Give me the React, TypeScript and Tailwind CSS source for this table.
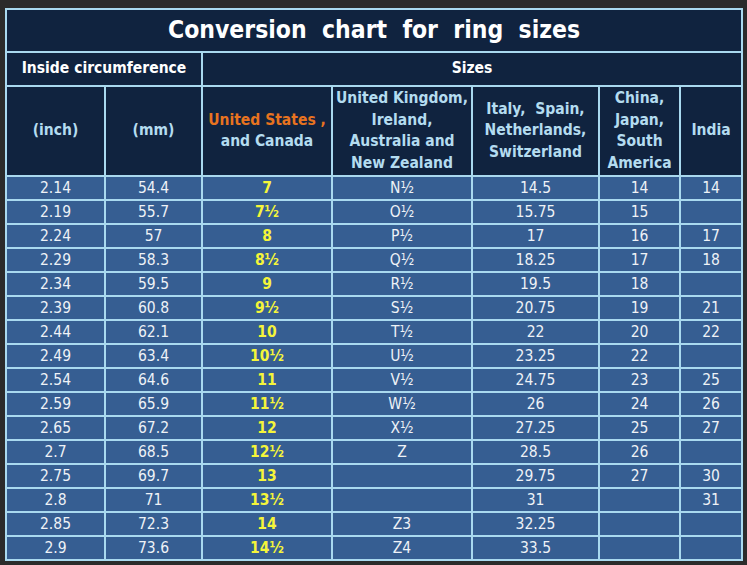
import React from 'react';

const rows: [string, string, string, string, string, string, string][] = [
  ['2.14', '54.4', '7', 'N½', '14.5', '14', '14'],
  ['2.19', '55.7', '7½', 'O½', '15.75', '15', ''],
  ['2.24', '57', '8', 'P½', '17', '16', '17'],
  ['2.29', '58.3', '8½', 'Q½', '18.25', '17', '18'],
  ['2.34', '59.5', '9', 'R½', '19.5', '18', ''],
  ['2.39', '60.8', '9½', 'S½', '20.75', '19', '21'],
  ['2.44', '62.1', '10', 'T½', '22', '20', '22'],
  ['2.49', '63.4', '10½', 'U½', '23.25', '22', ''],
  ['2.54', '64.6', '11', 'V½', '24.75', '23', '25'],
  ['2.59', '65.9', '11½', 'W½', '26', '24', '26'],
  ['2.65', '67.2', '12', 'X½', '27.25', '25', '27'],
  ['2.7', '68.5', '12½', 'Z', '28.5', '26', ''],
  ['2.75', '69.7', '13', '', '29.75', '27', '30'],
  ['2.8', '71', '13½', '', '31', '', '31'],
  ['2.85', '72.3', '14', 'Z3', '32.25', '', ''],
  ['2.9', '73.6', '14½', 'Z4', '33.5', '', ''],
];

const cell = 'border-2 border-[#a9d9ef] text-center p-0';
const head = `${cell} bg-[#10233f] text-[#b4dcf0] font-bold text-[15.5px] leading-[21.5px] whitespace-pre`;

export default function App() {
  return (
    <div className="min-h-screen bg-[#2b2b2b] pt-[8px] pl-[5px] font-['DejaVu_Sans_Condensed','DejaVu_Sans',sans-serif] font-stretch-condensed">
      <table className="table-fixed border-collapse border-2 border-[#a9d9ef] w-[736px]">
        <colgroup>
          <col className="w-[99px]" />
          <col className="w-[97px]" />
          <col className="w-[130px]" />
          <col className="w-[140px]" />
          <col className="w-[127px]" />
          <col className="w-[81px]" />
          <col className="w-[62px]" />
        </colgroup>
        <thead>
          <tr className="h-[43px]">
            <th colSpan={7} className={`${cell} bg-[#10233f] text-white font-bold text-[24.5px] whitespace-pre`}>
              {'Conversion  chart  for  ring  sizes'}
            </th>
          </tr>
          <tr className="h-[34px]">
            <th colSpan={2} className={`${cell} bg-[#10233f] text-white font-bold text-[15.5px]`}>
              Inside circumference
            </th>
            <th colSpan={5} className={`${cell} bg-[#10233f] text-white font-bold text-[15.5px]`}>
              Sizes
            </th>
          </tr>
          <tr className="h-[90px]">
            <th className={head}>(inch)</th>
            <th className={head}>(mm)</th>
            <th className={head}>
              <span className="text-[#e8731f]">United States ,</span>
              <br />
              and Canada
            </th>
            <th className={head}>
              United Kingdom,
              <br />
              Ireland,
              <br />
              Australia and
              <br />
              New Zealand
            </th>
            <th className={head}>
              {'Italy,  Spain,'}
              <br />
              Netherlands,
              <br />
              Switzerland
            </th>
            <th className={head}>
              China,
              <br />
              Japan,
              <br />
              South
              <br />
              America
            </th>
            <th className={head}>India</th>
          </tr>
        </thead>
        <tbody>
          {rows.map((r) => (
            <tr key={r[0]} className="h-[24px] bg-[#365e92] text-[15.5px] text-[#eef2f7] leading-[20px]">
              <td className={cell}>{r[0]}</td>
              <td className={cell}>{r[1]}</td>
              <td className={`${cell} text-[#f5f53a] font-bold`}>{r[2]}</td>
              <td className={cell}>{r[3]}</td>
              <td className={cell}>{r[4]}</td>
              <td className={cell}>{r[5]}</td>
              <td className={cell}>{r[6]}</td>
            </tr>
          ))}
        </tbody>
      </table>
    </div>
  );
}
